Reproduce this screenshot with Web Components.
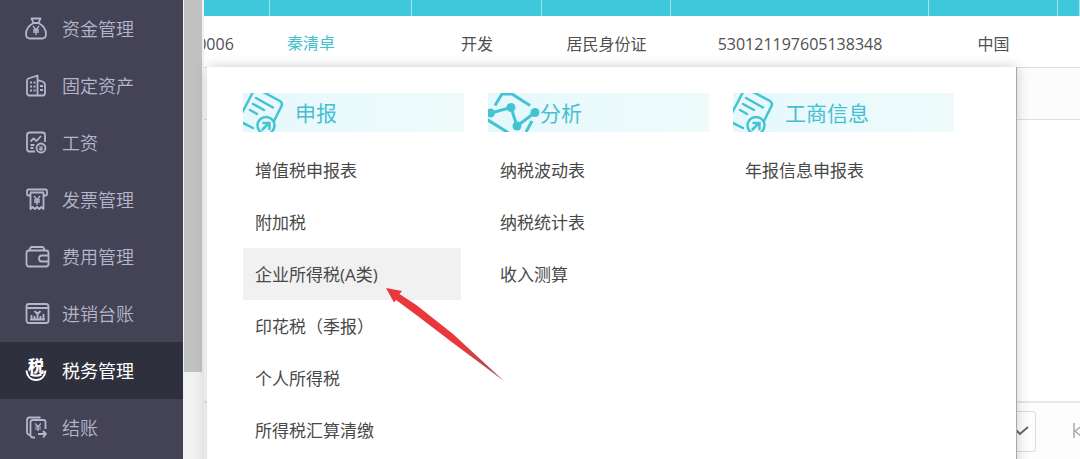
<!DOCTYPE html>
<html lang="zh-CN">
<head>
<meta charset="utf-8">
<title>税务管理</title>
<style>
  html, body {
    height: 100%;
  }

  body {
    margin: 0;
    overflow: hidden;
    background: #ffffff;
    font-family: "Open Sans", "Noto Sans CJK SC", sans-serif;
    color: #505050;
  }
</style>
</head>
<body>
<app-shell>
  <side-nav slot="nav">
    <nav-item icon="fund">资金管理</nav-item>
    <nav-item icon="asset">固定资产</nav-item>
    <nav-item icon="salary">工资</nav-item>
    <nav-item icon="invoice">发票管理</nav-item>
    <nav-item icon="wallet">费用管理</nav-item>
    <nav-item icon="ledger">进销台账</nav-item>
    <nav-item icon="tax" active>税务管理</nav-item>
    <nav-item icon="close">结账</nav-item>
  </side-nav>
  <staff-table></staff-table>
  <page-bar></page-bar>
  <mega-menu slot="menu">
    <menu-group icon="report" heading="申报">
      <menu-link>增值税申报表</menu-link>
      <menu-link>附加税</menu-link>
      <menu-link active>企业所得税(A类)</menu-link>
      <menu-link>印花税（季报）</menu-link>
      <menu-link>个人所得税</menu-link>
      <menu-link>所得税汇算清缴</menu-link>
    </menu-group>
    <menu-group icon="chart" heading="分析">
      <menu-link>纳税波动表</menu-link>
      <menu-link>纳税统计表</menu-link>
      <menu-link>收入测算</menu-link>
    </menu-group>
    <menu-group icon="report" heading="工商信息">
      <menu-link>年报信息申报表</menu-link>
    </menu-group>
  </mega-menu>
  <pointer-arrow slot="menu"></pointer-arrow>
</app-shell>

<script>
const yen = (x, y) => `<path d="M${x - 3} ${y - 4}l3 4 3-4M${x} ${y}v5M${x - 3} ${y}h6M${x - 3} ${y + 2}h6" stroke-width="1.3"/>`;

const navIcons = {
  fund: `<path d="M6.500 1.500h9l-2 4.500h-5zM8.500 6C4 8.500 1 12.500 1 17c0 3 1.500 4.500 4 4.500h12c2.500 0 4-1.500 4-4.500 0-4.500-3-8.500-7.500-11"/>${yen(11, 13)}`,
  asset: `<path d="M12.500 21.500H4.500Q2 21.500 2 19V6.500q0-1.500 1.500-2L12.500 1.500zM12.500 6l5 1.500q2.500 1 2.500 3.500v8q0 2.500-2.500 2.500h-5M5 8.500h2M8.500 8.500h2M5 12.500h2M8.500 12.500h2M5 16.500h2M8.500 16.500h2M15 12h3M15 16h3"/>`,
  salary: `<path d="M10 20.500H4.500Q2 20.500 2 18V4q0-2.500 2.500-2.500h13Q20 1.500 20 4v7M5.500 10.500l3-3 3 2.500 4.500-5M5.500 14h4M5.500 17h3"/><circle cx="16" cy="17" r="4.500"/><path d="M14 14.500l2 2 2-2M16 16.500v3.500M14 17h4M14 18.500h4" stroke-width="1"/>`,
  invoice: `<path d="M5 7.500H3Q2 7.500 2 6V3q0-1.500 1.500-1.500h17Q22 1.500 22 3v3q0 1.500-1 1.500h-2M5 4.500h14M5.500 5v16l2.200-2 2.200 2 2.100-2 2.100 2 2.200-2 2.200 2V5"/>${yen(12, 12)}`,
  wallet: `<path d="M4 5.500L6 2h12l2 3.500M4 5.500h17q2.500 0 2.500 2.500v11q0 2.500-2.500 2.500H4Q1.500 21.500 1.500 19V8Q1.500 5.500 4 5.500zM23.500 10.500H17q-3 0-3 3t3 3h6.500"/>`,
  ledger: `<rect x="1.500" y="2" width="22" height="19" rx="2.500"/><path d="M2 6h21M5 17.500h15M6.500 17v-4M9.500 17v-3M15.500 17v-3M18.500 17v-5M12.500 17v-7M9.500 9l3 3 3-3"/>`,
  tax: `<text x="3" y="13" font-size="16" font-weight="900" fill="currentColor" stroke="none">税</text><path d="M1.500 11.500c.5 5.500 4 9.500 9.500 9.500s9-4 9.500-9.500M5.500 15.500q5.500 2.500 11 0" stroke-width="2"/>`,
  close: `<path d="M6 19q-4 0-4-3V4q0-2.500 2.500-2.500h11M10 21.500H8Q5.500 21.500 5.500 19V6Q5.500 4 8 4h10.500Q20.500 4 20.500 6v7M13 18h8M18 15l3 3-3 3.500"/><path d="M10 7.500l3 3 3-3M13 10.500V15M10 11h6M10 13h6" stroke-width="1.200"/>`
};

const groupIcons = {
  report: `<path d="M-1 20L10-1M20-1l17 9q3 2 1.500 5L31 28M-1 29.500L10 35M13 5l17 9.500M10 11l11 6M7 17l7 4"/><circle cx="23" cy="32.500" r="8.500"/><path d="M19.500 36.500l6.500-6.500M20.500 30H26.500V36"/>`,
  chart: `<g stroke-width="3"><path d="M7 12.500L14 1h10l18 11.500M-1 26.500L20 39.500M44 28l-6 11" stroke-linecap="butt"/><path d="M3 20l20-5.500L29 33 47 19.500"/></g><g fill="currentColor" stroke="none"><circle cx="2.500" cy="20" r="4.500"/><circle cx="23" cy="14.500" r="4.500"/><circle cx="29" cy="33" r="4.500"/><circle cx="47" cy="19.500" r="4.500"/></g>`
};

class AppShell extends HTMLElement {
  constructor() {
    super();
    this.attachShadow({ mode: 'open' }).innerHTML = `
    <style>
      :host {
        display: flex;
        position: relative;
        height: 100vh;
        overflow: hidden;
      }

      main {
        flex: 1;
        min-width: 0;
        display: flex;
        flex-direction: column;
        overflow: hidden;
      }
    </style>
    <slot name="nav"></slot>
    <main><slot></slot></main>
    <slot name="menu"></slot>
    `;
  }
}

class SideNav extends HTMLElement {
  constructor() {
    super();
    this.attachShadow({ mode: 'open' }).innerHTML = `
    <style>
      :host {
        display: flex;
        flex: none;
        width: 204px;
      }

      nav {
        flex: 1;
        background: #444355;
      }

      /* scroll track with its thumb */
      .track {
        width: 20px;
        padding-left: 1px;
        background: #f1f1f1;
      }

      .thumb {
        width: 18px;
        height: 81%;
        background: #c1c1c1;
      }
    </style>
    <nav aria-label="主菜单"><slot></slot></nav>
    <div class="track"><div class="thumb"></div></div>
    `;
  }
}

class NavItem extends HTMLElement {
  connectedCallback() {
    this.attachShadow({ mode: 'open' }).innerHTML = `
    <style>
      :host {
        display: block;
      }

      a {
        display: flex;
        align-items: center;
        gap: 13px;
        height: 57px;
        padding-left: 25px;
        color: #b4b7cc;
        font-size: 18px;
        font-weight: 350;
        line-height: 24px;
        text-decoration: none;
      }

      :host([active]) a {
        background: #2e303d;
        color: #ffffff;
        font-weight: 400;
      }

      svg {
        flex: none;
        width: 24px;
        height: 24px;
        overflow: visible;
      }
    </style>
    <a href="#">
      <svg viewBox="0 0 24 24" fill="none" stroke="currentColor" stroke-width="1.800" stroke-linejoin="round" aria-hidden="true">${navIcons[this.getAttribute('icon')]}</svg>
      <span><slot></slot></span>
    </a>
    `;
  }
}

class StaffTable extends HTMLElement {
  constructor() {
    super();
    this.attachShadow({ mode: 'open' }).innerHTML = `
    <style>
      :host {
        display: block;
        flex: 1;
        overflow: hidden;
      }

      /* scrolled sideways, the first column is cut by the nav */
      table {
        width: calc(100% + 43px);
        margin-left: -43px;
        table-layout: fixed;
        border-collapse: separate;
        border-spacing: 0;
        font-size: 16px;
        line-height: 24px;
      }

      th {
        height: 16px;
        padding: 0;
        background: #3fc7dc;
        border-right: 1px solid #a5e4ee;
        box-sizing: border-box;
      }

      td {
        height: 52px;
        padding: 4px 0 0;
        box-sizing: border-box;
        border-bottom: 1px solid #dedede;
        text-align: center;
        white-space: nowrap;
      }

      td.name {
        padding: 2px 0 0 17px;
        text-align: left;
      }

      td a {
        color: #45bfd0;
        text-decoration: none;
      }

      .next td {
        background: #fcfcfc;
      }
    </style>
    <table>
      <colgroup>
        <col style="width: 109px"><col style="width: 142px"><col style="width: 130px">
        <col style="width: 129px"><col style="width: 258px"><col style="width: 129px"><col>
      </colgroup>
      <thead>
        <tr><th></th><th></th><th></th><th></th><th></th><th></th><th></th></tr>
      </thead>
      <tbody>
        <tr>
          <td>0006</td>
          <td class="name"><a href="#">秦清卓</a></td>
          <td>开发</td>
          <td>居民身份证</td>
          <td>530121197605138348</td>
          <td>中国</td>
          <td></td>
        </tr>
        <tr class="next"><td colspan="7"></td></tr>
      </tbody>
    </table>
    `;
  }
}

class PageBar extends HTMLElement {
  constructor() {
    super();
    this.attachShadow({ mode: 'open' }).innerHTML = `
    <style>
      :host {
        display: flex;
        justify-content: flex-end;
        align-items: center;
        gap: 32px;
        height: 56px;
        border-top: 2px solid #e6e6e6;
        background: #fdfdfd;
      }

      .size {
        display: grid;
        align-items: center;
        justify-items: end;
      }

      .size > * {
        grid-area: 1 / 1;
      }

      select {
        width: 96px;
        height: 41px;
        border: 1px solid #dcdcdc;
        border-radius: 3px;
        background: #fdfdfd;
        appearance: none;
      }

      .size svg {
        margin-right: 7px;
        pointer-events: none;
      }

      button {
        width: 12px;
        height: 24px;
        padding: 0;
        border: 0;
        background: none;
        overflow: hidden;
      }

      svg {
        display: block;
      }
    </style>
    <div class="size">
      <select aria-label="每页条数"><option></option></select>
      <svg width="14" height="10" viewBox="0 0 14 10" fill="none" stroke="#666" stroke-width="2"><path d="M1 4l4 4 8-7"/></svg>
    </div>
    <button type="button" aria-label="首页">
      <svg width="16" height="24" viewBox="0 0 16 24" fill="none" stroke="#aaa" stroke-width="1.500"><path d="M6 4v15M14 7l-7 5 7 6"/></svg>
    </button>
    `;
  }
}

class MegaMenu extends HTMLElement {
  constructor() {
    super();
    this.attachShadow({ mode: 'open' }).innerHTML = `
    <style>
      :host {
        position: absolute;
        top: 67px;
        right: 63px;
        bottom: -20px;
        left: 207px;
        box-sizing: border-box;
        display: grid;
        grid-template-columns: repeat(3, 1fr);
        align-items: start;
        gap: 24px;
        padding: 26px 62px 0 36px;
        border-right: 1px solid #a8a8a8;
        background: #ffffff;
        box-shadow: 0 0 12px rgba(0, 0, 0, 0.2);
      }
    </style>
    <slot></slot>
    `;
  }
}

class MenuGroup extends HTMLElement {
  connectedCallback() {
    this.attachShadow({ mode: 'open' }).innerHTML = `
    <style>
      :host {
        display: block;
      }

      h2 {
        display: flex;
        align-items: center;
        height: 39px;
        margin: 0 0 12px;
        background: linear-gradient(90deg, #e6f8fd, #effbfb);
        color: #45c0d0;
        font-size: 21px;
        font-weight: 400;
        line-height: 28px;
      }

      svg {
        flex: none;
        width: 52px;
        height: 39px;
        color: #44c3d2;
      }

      div {
        margin-right: 3px;
      }
    </style>
    <h2>
      <svg viewBox="0 0 52 39" fill="none" stroke="currentColor" stroke-width="2.500" stroke-linecap="round" aria-hidden="true">${groupIcons[this.getAttribute('icon')]}</svg>
      <span>${this.getAttribute('heading')}</span>
    </h2>
    <div><slot></slot></div>
    `;
  }
}

class MenuLink extends HTMLElement {
  constructor() {
    super();
    this.attachShadow({ mode: 'open' }).innerHTML = `
    <style>
      :host {
        display: block;
      }

      a {
        display: flex;
        align-items: center;
        height: 52px;
        box-sizing: border-box;
        padding: 2px 0 0 12px;
        color: #484848;
        font-size: 17px;
        line-height: 24px;
        text-decoration: none;
        white-space: nowrap;
      }

      :host([active]) a,
      a:hover {
        background: #f1f1f1;
      }
    </style>
    <a href="#"><span><slot></slot></span></a>
    `;
  }
}

class PointerArrow extends HTMLElement {
  constructor() {
    super();
    this.attachShadow({ mode: 'open' }).innerHTML = `
    <style>
      :host {
        position: absolute;
        top: 288px;
        left: 386px;
        pointer-events: none;
      }

      svg {
        display: block;
      }
    </style>
    <svg width="118" height="93" viewBox="0 0 118 93" aria-hidden="true">
      <defs>
        <linearGradient id="fade" x1="0" y1="0" x2="1" y2="1">
          <stop offset="0.600" stop-color="#e8383d"/>
          <stop offset="1" stop-color="#a4505c"/>
        </linearGradient>
      </defs>
      <path fill="url(#fade)" d="M0 0L16 3 13.500 6 31 17.500 67 46 118 93 67 55 31 27.500 10 12 8 14.500z"/>
    </svg>
    `;
  }
}

customElements.define('app-shell', AppShell);
customElements.define('side-nav', SideNav);
customElements.define('nav-item', NavItem);
customElements.define('staff-table', StaffTable);
customElements.define('page-bar', PageBar);
customElements.define('mega-menu', MegaMenu);
customElements.define('menu-group', MenuGroup);
customElements.define('menu-link', MenuLink);
customElements.define('pointer-arrow', PointerArrow);
</script>
</body>
</html>
